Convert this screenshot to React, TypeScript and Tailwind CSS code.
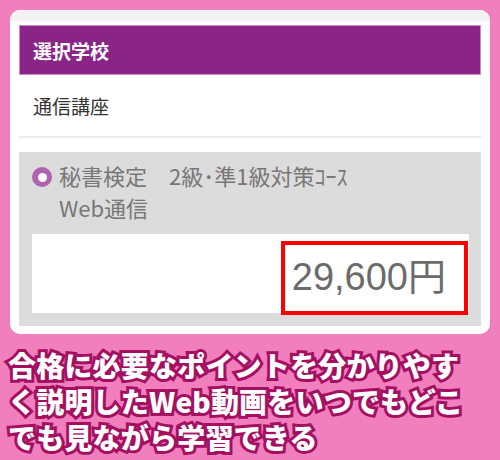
export default function App() {
  return (
    <div className="w-[500px] h-[460px] bg-[#f17fbe] pt-[10px] px-[10px] overflow-hidden font-['Noto_Sans_CJK_JP',sans-serif]">
      {/* 選択カード */}
      <div className="bg-white rounded-[10px] overflow-hidden h-[324px]">
        <div className="h-[11px] bg-[#f2f2f2]" />
        <div className="px-[9px] pt-[4px]">
          <div className="h-[50px] bg-[#8a2587] border border-[#c58fc4] flex items-center px-[13px]">
            <span className="text-white font-bold text-[19px] leading-none">選択学校</span>
          </div>
          <div className="h-[63px] flex items-center px-[14px] border-b-2 border-[#ececec]">
            <span className="text-[#333] text-[19px] leading-none">通信講座</span>
          </div>
          <div className="mt-[14px] bg-[#dcdcdc] h-[174px] pt-[7px] px-[13px] relative">
            <div className="flex items-start gap-[7px]">
              <div className="mt-[8px] w-[20px] h-[20px] rounded-full bg-[#b062b0] flex items-center justify-center shrink-0">
                <div className="w-[9px] h-[9px] rounded-full bg-white" />
              </div>
              <div className="text-[#777] text-[22px] leading-[32px] whitespace-nowrap">
                <div>秘書検定　2級･準1級対策ｺｰｽ</div>
                <div>Web通信</div>
              </div>
            </div>
            <div className="mt-[11px] bg-white h-[79px] mr-[-1px]" />
            <div className="absolute left-[262px] top-[89px] w-[187px] h-[74px] border-[4px] border-[#ff0000] flex items-center justify-end pr-[18px] pb-[2px]">
              <span className="text-[#6b6b6b] text-[38px] leading-none font-['Liberation_Sans','Noto_Sans_CJK_JP',sans-serif]">
                29,600円
              </span>
            </div>
          </div>
        </div>
      </div>

      {/* キャプション */}
      <div className="-mx-[2px] mt-[13px] text-white font-black text-[28px] leading-[36px] tracking-[0.2px] [-webkit-text-stroke:6px_#a50f62] [paint-order:stroke_fill] whitespace-nowrap">
        <div>合格に必要なポイントを分かりやす</div>
        <div>く説明したWeb動画をいつでもどこ</div>
        <div>でも見ながら学習できる</div>
      </div>
    </div>
  )
}
